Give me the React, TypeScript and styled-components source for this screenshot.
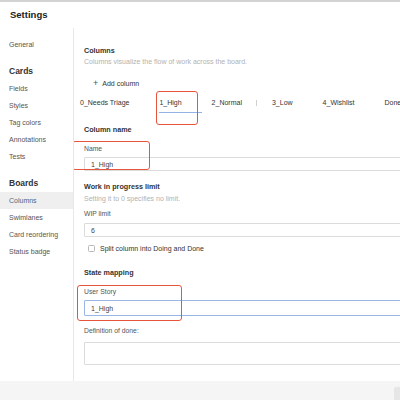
import React from "react";
import styled, { createGlobalStyle } from "styled-components";

const Global = createGlobalStyle`
  html, body { margin: 0; padding: 0; background: #fff; }
  body { font-family: "Liberation Sans", Arial, sans-serif; }
  * { box-sizing: border-box; }
`;

const Page = styled.div`
  width: 400px;
  height: 400px;
  overflow: hidden;
  display: flex;
  flex-direction: column;
  background: #fff;
`;

const TopRule = styled.div`
  height: 2px;
  background: #d2d2d2;
  flex: none;
`;

const Header = styled.div`
  height: 26px;
  line-height: 26px;
  padding-left: 10px;
  font-size: 9.5px;
  font-weight: 700;
  color: #222;
  flex: none;
`;

const Body = styled.div`
  flex: 1;
  display: flex;
  min-height: 0;
`;

const Sidebar = styled.nav`
  width: 74px;
  flex: none;
  border-right: 1px solid #e8e8e8;
  padding-top: 8px;
  display: flex;
  flex-direction: column;
`;

const SideItem = styled.div<{ $active?: boolean }>`
  height: 17px;
  line-height: 17px;
  padding-left: 9px;
  font-size: 7px;
  color: ${(p) => (p.$active ? "#51657d" : "#555")};
  background: ${(p) => (p.$active ? "#efefef" : "transparent")};
  white-space: nowrap;
`;

const SideGroup = styled.div`
  height: 18px;
  line-height: 18px;
  margin-top: 9px;
  padding-left: 9px;
  font-size: 8.5px;
  font-weight: 700;
  color: #333;
`;

const Main = styled.main`
  flex: 1;
  min-width: 0;
  overflow: hidden;
  padding: 18px 0 0 10px;
  display: flex;
  flex-direction: column;
`;

const Title = styled.div<{ $mt?: number }>`
  line-height: 10px;
  height: 10px;
  margin-top: ${(p) => p.$mt ?? 0}px;
  font-size: 7.2px;
  font-weight: 700;
  color: #333;
  white-space: nowrap;
`;

const Desc = styled.div<{ $mt?: number }>`
  line-height: 10px;
  height: 10px;
  margin-top: ${(p) => p.$mt ?? 0}px;
  font-size: 7px;
  color: #b2b2b2;
  white-space: nowrap;
`;

const AddRow = styled.div`
  margin-top: 11px;
  height: 10px;
  display: flex;
  align-items: center;
  gap: 4px;
  padding-left: 9px;
  font-size: 7px;
  color: #333;
`;

const Plus = styled.span`
  font-size: 9px;
  line-height: 10px;
  color: #555;
`;

const TabList = styled.div`
  margin: 4px 0 0 -4px;
  height: 21px;
  display: flex;
  align-items: center;
  gap: 30px;
  white-space: nowrap;
`;

const Tab = styled.div<{ $active?: boolean; $divided?: boolean }>`
  position: relative;
  height: 21px;
  line-height: 21px;
  font-size: 7px;
  color: #333;
  flex: none;
  &::after {
    content: "";
    display: ${(p) => (p.$active ? "block" : "none")};
    position: absolute;
    left: 0;
    bottom: 0;
    width: calc(100% + 20px);
    height: 1.5px;
    background: #93b3e8;
  }
  &::before {
    content: "";
    display: ${(p) => (p.$divided ? "block" : "none")};
    position: absolute;
    left: -16px;
    top: 8px;
    width: 1px;
    height: 6px;
    background: #d0d0d0;
  }
`;

const Group = styled.div`
  position: relative;
  display: flex;
  flex-direction: column;
`;

const Highlight = styled.div<{ $l: number; $t: number; $w: number; $h: number }>`
  position: absolute;
  left: ${(p) => p.$l}px;
  top: ${(p) => p.$t}px;
  width: ${(p) => p.$w}px;
  height: ${(p) => p.$h}px;
  border: 1.5px solid #e6543c;
  border-radius: 3px;
  pointer-events: none;
  z-index: 2;
`;

const Label = styled.div<{ $mt?: number }>`
  line-height: 10px;
  height: 10px;
  margin-top: ${(p) => p.$mt ?? 0}px;
  font-size: 6.8px;
  color: #555;
  white-space: nowrap;
`;

const Input = styled.div<{ $mt?: number; $focus?: boolean; $h?: number }>`
  margin-top: ${(p) => p.$mt ?? 0}px;
  width: 340px;
  height: ${(p) => p.$h ?? 14}px;
  border: ${(p) => (p.$focus ? "1.5px solid #9ab8e6" : "1px solid #dcdcdc")};
  border-radius: 1px;
  padding-left: 6px;
  display: flex;
  align-items: center;
  font-size: 7px;
  color: #444;
  background: #fff;
  flex: none;
`;

const TextArea = styled.div`
  margin-top: 6px;
  width: 340px;
  height: 23px;
  border: 1px solid #dcdcdc;
  border-radius: 1px;
  flex: none;
`;

const CheckRow = styled.label`
  margin-top: 6px;
  height: 10px;
  display: flex;
  align-items: center;
  gap: 5px;
  padding-left: 4px;
  font-size: 7px;
  color: #333;
  white-space: nowrap;
`;

const Box = styled.span`
  width: 7px;
  height: 7px;
  border: 1px solid #b8b8b8;
  border-radius: 1.5px;
  background: #fff;
  flex: none;
`;

const Footer = styled.div`
  height: 19px;
  flex: none;
  background: #f5f5f5;
  position: relative;
`;

const ScrollNub = styled.div`
  position: absolute;
  right: 0;
  top: 6px;
  width: 6px;
  height: 13px;
  background: #e6e6e6;
  border-radius: 2px 0 0 0;
`;

const tabs = ["0_Needs Triage", "1_High", "2_Normal", "3_Low", "4_Wishlist", "Done"];

export default function App() {
  return (
    <>
      <Global />
      <Page>
        <TopRule />
        <Header>Settings</Header>
        <Body>
          <Sidebar>
            <SideItem>General</SideItem>
            <SideGroup>Cards</SideGroup>
            <SideItem>Fields</SideItem>
            <SideItem>Styles</SideItem>
            <SideItem>Tag colors</SideItem>
            <SideItem>Annotations</SideItem>
            <SideItem>Tests</SideItem>
            <SideGroup>Boards</SideGroup>
            <SideItem $active>Columns</SideItem>
            <SideItem>Swimlanes</SideItem>
            <SideItem>Card reordering</SideItem>
            <SideItem>Status badge</SideItem>
          </Sidebar>
          <Main>
            <Title>Columns</Title>
            <Desc $mt={1}>Columns visualize the flow of work across the board.</Desc>
            <AddRow>
              <Plus>+</Plus>
              <span>Add column</span>
            </AddRow>
            <TabList>
              {tabs.map((t) => (
                <Tab key={t} $active={t === "1_High"} $divided={t === "3_Low"}>
                  {t}
                  {t === "1_High" && <Highlight $l={-3} $t={-1} $w={42} $h={34} />}
                </Tab>
              ))}
            </TabList>
            <Title $mt={12}>Column name</Title>
            <Group>
              <Highlight $l={-12} $t={6} $w={78} $h={29} />
              <Label $mt={9}>Name</Label>
              <Input $mt={3}>1_High</Input>
            </Group>
            <Title $mt={11}>Work in progress limit</Title>
            <Desc $mt={2}>Setting it to 0 specifies no limit.</Desc>
            <Label $mt={5}>WIP limit</Label>
            <Input $mt={4}>6</Input>
            <CheckRow>
              <Box />
              <span>Split column into Doing and Done</span>
            </CheckRow>
            <Title $mt={15}>State mapping</Title>
            <Group>
              <Highlight $l={-7} $t={7} $w={105} $h={36} />
              <Label $mt={9}>User Story</Label>
              <Input $mt={3} $h={16} $focus>1_High</Input>
            </Group>
            <Label $mt={10}>Definition of done:</Label>
            <TextArea />
          </Main>
        </Body>
        <Footer>
          <ScrollNub />
        </Footer>
      </Page>
    </>
  );
}
